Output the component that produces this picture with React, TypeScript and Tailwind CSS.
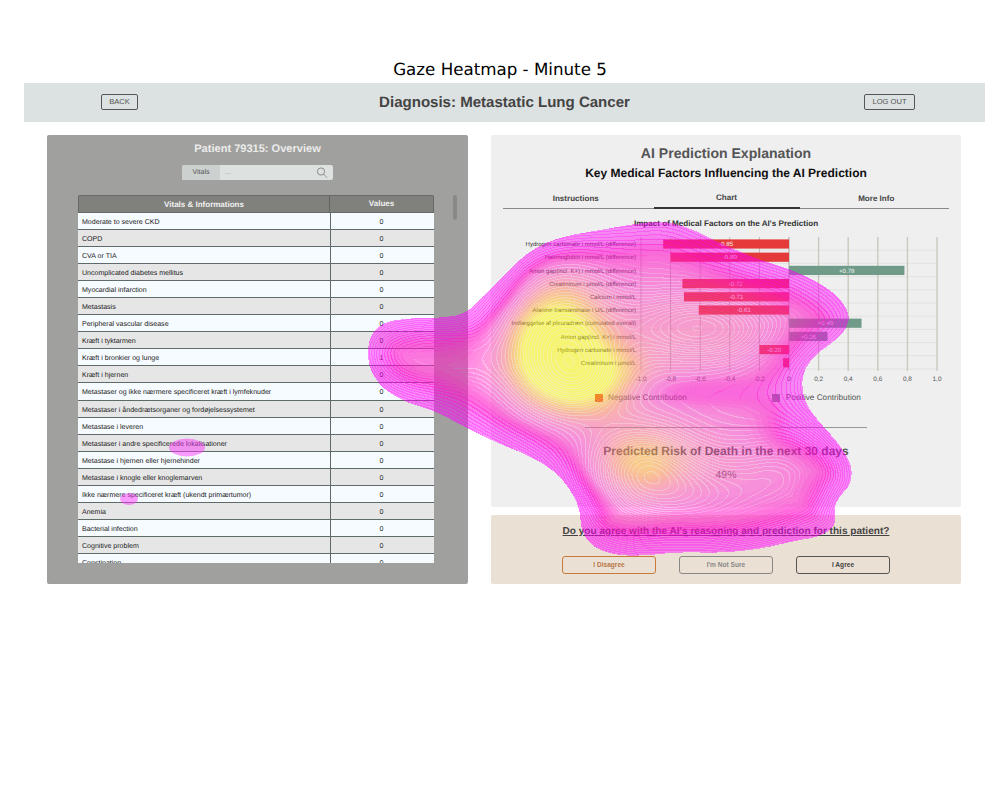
const SANS = "font-['Liberation_Sans',Arial,sans-serif]";

const ROWS: [string, number][] = [
  ["Moderate to severe CKD", 0],
  ["COPD", 0],
  ["CVA or TIA", 0],
  ["Uncomplicated diabetes mellitus", 0],
  ["Myocardial infarction", 0],
  ["Metastasis", 0],
  ["Peripheral vascular disease", 0],
  ["Kræft i tyktarmen", 0],
  ["Kræft i bronkier og lunge", 1],
  ["Kræft i hjernen", 0],
  ["Metastaser og ikke nærmere specificeret kræft i lymfeknuder", 0],
  ["Metastaser i åndedrætsorganer og fordøjelsessystemet", 0],
  ["Metastase i leveren", 0],
  ["Metastaser i andre specificerede lokalisationer", 0],
  ["Metastase i hjernen eller hjernehinder", 0],
  ["Metastase i knogle eller knoglemarven", 0],
  ["Ikke nærmere specificeret kræft (ukendt primærtumor)", 0],
  ["Anemia", 0],
  ["Bacterial infection", 0],
  ["Cognitive problem", 0],
  ["Constipation", 0],
];

const BARS: [string, number, string][] = [
  ["Hydrogen carbonate i mmol/L (difference)", -0.85, "-0.85"],
  ["Haemoglobin i mmol/L (difference)", -0.8, "-0.80"],
  ["Anion gap(incl. K+) i mmol/L (difference)", 0.78, "+0.78"],
  ["Creatininum i µmol/L (difference)", -0.72, "-0.72"],
  ["Calcium i mmol/L", -0.71, "-0.71"],
  ["Alanine transaminase i U/L (difference)", -0.61, "-0.61"],
  ["Indlæggelse af pleuradræn (cumulated overall)", 0.49, "+0.49"],
  ["Anion gap(incl. K+) i mmol/L", 0.26, "+0.26"],
  ["Hydrogen carbonate i mmol/L", -0.2, "-0.20"],
  ["Creatininum i µmol/L", -0.04, ""],
];

const TICKS = ["-1,0", "-0,8", "-0,6", "-0,4", "-0,2", "0", "0,2", "0,4", "0,6", "0,8", "1,0"];

// heatmap outline, page coordinates
const OUTLINE: [number, number][] = [
  [367, 350], [372, 332], [385, 322], [410, 318], [440, 318], [465, 314], [480, 300],
  [505, 275], [530, 250], [560, 237], [600, 230], [640, 223], [665, 221], [690, 228],
  [720, 243], [760, 260], [790, 269], [820, 283], [840, 298], [850, 315], [846, 330],
  [832, 343], [815, 355], [803, 372], [802, 390], [808, 408], [822, 425], [840, 445],
  [852, 465], [851, 485], [838, 498], [834, 510], [836, 525], [822, 536], [790, 542],
  [760, 549], [720, 553], [680, 552], [640, 556], [615, 555], [592, 547], [581, 530],
  [580, 510], [572, 492], [556, 472], [530, 456], [500, 444], [470, 430], [435, 411],
  [405, 402], [382, 388], [370, 370],
];

function chaikin(pts: [number, number][], rounds: number) {
  let out = pts;
  for (let r = 0; r < rounds; r++) {
    const next: [number, number][] = [];
    out.forEach((p, i) => {
      const q = out[(i + 1) % out.length];
      next.push([p[0] * 0.75 + q[0] * 0.25, p[1] * 0.75 + q[1] * 0.25]);
      next.push([p[0] * 0.25 + q[0] * 0.75, p[1] * 0.25 + q[1] * 0.75]);
    });
    out = next;
  }
  return out;
}

// x, y, spread x, spread y, weight
const BUMPS = [
  [556, 333, 32, 38, 0.62],
  [584, 378, 38, 26, 0.62],
  [530, 352, 22, 30, 0.12],
  [640, 462, 34, 24, 0.34],
  [700, 330, 60, 28, 0.1],
  [700, 470, 60, 30, 0.06],
  [700, 392, 70, 11, -0.14],
  [795, 432, 24, 14, -0.1],
  [500, 300, 30, 14, -0.06],
];

// only bend the contour lines, so the plateau has no creases from the outline
const LINE_BUMPS = [
  [700, 328, 55, 26, 1],
  [690, 500, 70, 32, 1],
  [560, 345, 42, 50, 1.2],
  [585, 378, 30, 22, 0.4],
  [640, 462, 38, 28, 0.8],
  [790, 470, 35, 30, 0.5],
  [430, 355, 40, 22, 0.5],
];

// h, r, g, b, alpha: the spring colour map with an alpha that dips on the plateau
const RAMP = [
  [0, 255, 0, 255, 0.42],
  [0.2, 255, 0, 240, 0.46],
  [0.32, 255, 20, 205, 0.62],
  [0.37, 255, 30, 200, 0.6],
  [0.46, 255, 50, 200, 0.5],
  [0.6, 255, 100, 160, 0.52],
  [0.74, 255, 153, 102, 0.62],
  [0.87, 255, 200, 50, 0.58],
  [1, 255, 255, 0, 0.52],
];

function rampAt(h: number) {
  for (let i = 1; i < RAMP.length; i++) {
    if (h <= RAMP[i][0]) {
      const a = RAMP[i - 1];
      const b = RAMP[i];
      const t = (h - a[0]) / (b[0] - a[0]);
      return [1, 2, 3, 4].map((k) => a[k] + (b[k] - a[k]) * t);
    }
  }
  return RAMP[RAMP.length - 1].slice(1);
}

function buildHeat() {
  const poly = chaikin(OUTLINE, 2);
  const X0 = 360;
  const Y0 = 215;
  const W = 500;
  const H = 345;
  const BANDS = 40;
  const level = new Float32Array(W * H).fill(-1);
  const heat = new Float32Array(W * H);
  const n = poly.length;
  for (let j = 0; j < H; j++) {
    const py = Y0 + j + 0.5;
    for (let i = 0; i < W; i++) {
      const px = X0 + i + 0.5;
      let best = 1e9;
      let inside = false;
      for (let k = 0, m = n - 1; k < n; m = k++) {
        const ax = poly[m][0];
        const ay = poly[m][1];
        const bx = poly[k][0];
        const by = poly[k][1];
        const ex = bx - ax;
        const ey = by - ay;
        let t = ((px - ax) * ex + (py - ay) * ey) / (ex * ex + ey * ey);
        t = t < 0 ? 0 : t > 1 ? 1 : t;
        const qx = ax + ex * t - px;
        const qy = ay + ey * t - py;
        const dd = qx * qx + qy * qy;
        if (dd < best) best = dd;
        if (ay > py !== by > py && px < ax + ((py - ay) / ey) * ex) inside = !inside;
      }
      if (!inside) continue;
      const d = Math.sqrt(best);
      let h = 0.46 * (1 - Math.exp(-d / 24));
      for (const b of BUMPS) {
        const u = (px - b[0]) / b[2];
        const v = (py - b[1]) / b[3];
        h += b[4] * Math.exp(-0.5 * (u * u + v * v));
      }
      let s = 0;
      for (const b of LINE_BUMPS) {
        const u = (px - b[0]) / b[2];
        const v = (py - b[1]) / b[3];
        s += b[4] * Math.exp(-0.5 * (u * u + v * v));
      }
      h = Math.max(0, Math.min(1, h));
      heat[j * W + i] = h;
      level[j * W + i] = (38 * (1 - Math.exp(-d / 30))) / 3.6 + s * 20;
    }
  }
  const paths = new Map<string, string[]>();
  const keyAt = (i: number, j: number) => {
    const l = level[j * W + i];
    if (l < 0) return "";
    const band = Math.min(BANDS - 1, Math.floor(heat[j * W + i] * BANDS));
    const r = i + 1 < W ? level[j * W + i + 1] : -1;
    const b = j + 1 < H ? level[(j + 1) * W + i] : -1;
    const line =
      (r >= 0 && Math.floor(r) !== Math.floor(l)) || (b >= 0 && Math.floor(b) !== Math.floor(l));
    return `${band}${line ? "L" : "F"}`;
  };
  for (let j = 0; j < H; j++) {
    let start = 0;
    let cur = keyAt(0, j);
    for (let i = 1; i <= W; i++) {
      const k = i < W ? keyAt(i, j) : "";
      if (k !== cur) {
        if (cur) {
          const w = i - start;
          if (!paths.has(cur)) paths.set(cur, []);
          paths.get(cur)!.push(`M${X0 + start} ${Y0 + j}h${w}v1h-${w}z`);
        }
        start = i;
        cur = k;
      }
    }
  }
  return [...paths.entries()].map(([key, d]) => {
    const h = (parseInt(key) + 0.5) / BANDS;
    const c = rampAt(h);
    let alpha = c[3];
    if (key.endsWith("L")) {
      // lines read darker near the rim and as pale gaps further in
      const pale = Math.min(1, Math.max(0, (h - 0.28) / 0.16));
      alpha = c[3] * (1.35 - 0.7 * pale);
    }
    return { key, d: d.join(""), fill: `rgba(${c[0] | 0},${c[1] | 0},${c[2] | 0},${Math.min(alpha, 0.9).toFixed(2)})` };
  });
}

const HEAT = buildHeat();

function HeatOverlay() {
  return (
    <svg className="absolute top-0 left-0 pointer-events-none" width={1000} height={800} shapeRendering="crispEdges">
      {HEAT.map((p) => (
        <path key={p.key} d={p.d} fill={p.fill} />
      ))}
      <ellipse cx={187} cy={447.5} rx={18} ry={9} fill="rgba(250,60,250,0.5)" shapeRendering="auto" />
      <ellipse cx={129} cy={499} rx={9} ry={6} fill="rgba(250,60,250,0.5)" shapeRendering="auto" />
    </svg>
  );
}

function ImpactChart() {
  const zero = 298;
  const scale = 148;
  const top = 6;
  const pitch = 13.2;
  return (
    <svg width={470} height={153} className={`block ${SANS}`}>
      {BARS.map((_, i) => (
        <line key={i} x1={150} x2={446} y1={top + (i + 1) * pitch} y2={top + (i + 1) * pitch} stroke="#e2e2e0" />
      ))}
      {TICKS.map((_, i) => {
        const x = 150 + i * 29.6;
        return (
          <line
            key={i}
            x1={x}
            x2={x}
            y1={top}
            y2={top + 134}
            stroke={i > 5 ? "#c9cabd" : "#bdbdb8"}
            strokeWidth={i >= 5 ? 1.4 : 1}
          />
        );
      })}
      {BARS.map(([label, value, text], i) => {
        const y = top + 2.4 + i * pitch;
        const w = Math.abs(value) * scale;
        const x = value < 0 ? zero - w : zero;
        return (
          <g key={label}>
            <text x={145} y={y + 6.8} textAnchor="end" fontSize={6} fill="#333">
              {label}
            </text>
            <rect x={x} y={y} width={w} height={9.2} fill={value < 0 ? "#e53a3a" : "#6f9b88"} />
            <text x={x + w / 2} y={y + 6.8} textAnchor="middle" fontSize={6.2} fill="#f4f4f4">
              {text}
            </text>
          </g>
        );
      })}
      {TICKS.map((t, i) => (
        <text key={t} x={150 + i * 29.6} y={150} textAnchor="middle" fontSize={6.4} fill="#555">
          {t}
        </text>
      ))}
    </svg>
  );
}

function VitalsTable() {
  return (
    <div className="w-[356px] h-[368px] overflow-hidden rounded-t-[2px]">
      <div className="flex h-[18px] bg-[#80807c] border border-[#666b68] text-[8px] font-bold text-[#f2f2f2] items-center">
        <div className="w-[251px] text-center border-r border-[#5f6563] h-full leading-[17px]">Vitals & Informations</div>
        <div className="flex-1 text-center">Values</div>
      </div>
      {ROWS.map(([name, value], i) => (
        <div
          key={name}
          className={`flex h-[17.06px] border-b border-[#5f6b68] text-[7.05px] text-[#222] ${
            i % 2 === 0 ? "bg-[#f6fbff]" : "bg-[#e6e6e6]"
          }`}
        >
          <div className="w-[253px] pl-[4px] border-r border-[#5f6b68] leading-[19px] whitespace-nowrap">{name}</div>
          <div className="flex-1 text-center leading-[19px] pr-[2px]">{value}</div>
        </div>
      ))}
    </div>
  );
}

function PatientPanel() {
  return (
    <section className="relative w-[421px] h-[449px] bg-[#a0a09e] rounded-[2px] flex flex-col items-center pt-[7px]">
      <h2 className="text-[11.05px] leading-[14px] font-bold text-[#ececec]">Patient 79315: Overview</h2>
      <div className="mt-[9px] w-[151px] h-[15px] flex rounded-[2px] bg-[#dde1e0] overflow-hidden text-[7px] text-[#555]">
        <div className="w-[38px] bg-[#ccd0cf] text-center leading-[16px]">Vitals</div>
        <div className="flex-1 pl-[5px] leading-[16px] text-[#999]">...</div>
        <svg width={12} height={15} viewBox="0 0 12 15" className="mr-[5px]" fill="none" stroke="#777" strokeWidth={0.8}>
          <circle cx={5} cy={6.5} r={3.6} />
          <path d="M7.6 9.2 L11 12.6" />
        </svg>
      </div>
      <div className="mt-[15px] w-full flex pl-[31px]">
        <VitalsTable />
        <div className="ml-[19px] w-[4px] h-[25px] rounded-[2px] bg-[#898987]" />
      </div>
    </section>
  );
}

function ExplanationPanel() {
  return (
    <section className="h-[372px] bg-[#efefef] rounded-[2px] flex flex-col items-center pt-[9px]">
      <h2 className="text-[14.07px] leading-[18px] font-bold text-[#555]">AI Prediction Explanation</h2>
      <h3 className="mt-[3px] text-[12px] leading-[16px] font-bold text-[#111]">
        Key Medical Factors Influencing the AI Prediction
      </h3>
      <div className="mt-[8px] w-[446px] h-[20px] flex border-b border-[#888] text-[8.05px] font-bold text-[#444]">
        <div className="flex-1 text-center leading-[20px] pr-[5px]">Instructions</div>
        <div className="w-[146px] h-[20px] text-center leading-[17px] border-b-2 border-[#333]">Chart</div>
        <div className="flex-1 text-center leading-[20px] pl-[4px]">More Info</div>
      </div>
      <div className="mt-[9px] text-[8.1px] leading-[11px] font-bold text-[#333]">
        Impact of Medical Factors on the AI's Prediction
      </div>
      <div className="mt-[2px] w-full">
        <ImpactChart />
      </div>
      <div className="mt-[8px] flex items-center w-full text-[8.2px] leading-[12px] text-[#555]">
        <span className="ml-[104px] w-[8px] h-[8px] bg-[#e53a3a]" />
        <span className="ml-[5px]">Negative Contribution</span>
        <span className="ml-[85px] w-[8px] h-[8px] bg-[#6f9b88]" />
        <span className="ml-[6px]">Positive Contribution</span>
      </div>
      <div className="mt-[23px] w-[282px] border-t border-[#999]" />
      <div className="mt-[15px] text-[12px] leading-[16px] font-bold text-[#555]">
        Predicted Risk of Death in the next 30 days
      </div>
      <div className="mt-[10px] text-[10.4px] leading-[14px] text-[#666]">49%</div>
    </section>
  );
}

function AgreePanel() {
  return (
    <section className="h-[69px] bg-[#ebe0d4] rounded-[2px] flex flex-col items-center pt-[10px]">
      <div className="text-[10.07px] leading-[14px] font-bold text-[#444] underline">
        Do you agree with the AI's reasoning and prediction for this patient?
      </div>
      <div className="mt-[17px] flex gap-[23px] text-[6.6px] font-bold">
        <button className="w-[94px] h-[18px] rounded-[3px] border-[1.5px] border-[#c87a3a] text-[#b8794a]">I Disagree</button>
        <button className="w-[94px] h-[18px] rounded-[3px] border-[1.5px] border-[#888] text-[#888]">I'm Not Sure</button>
        <button className="w-[94px] h-[18px] rounded-[3px] border-[1.5px] border-[#555] text-[#444]">I Agree</button>
      </div>
    </section>
  );
}

export default function App() {
  return (
    <div className={`relative w-[1000px] h-[800px] bg-white overflow-hidden [text-rendering:geometricPrecision] ${SANS}`}>
      <div className="h-[83px] pt-[58px] text-center font-['DejaVu_Sans',sans-serif] text-[16.7px] leading-[22px] text-black">
        Gaze Heatmap - Minute 5
      </div>
      <div className="ml-[24px] w-[961px]">
        <header className="h-[39px] bg-[#dce1e1] flex items-center justify-between pl-[77px] pr-[70px]">
          <button className="w-[37px] h-[16px] rounded-[2px] border border-[#555] text-[7.6px] leading-[14px] text-[#555] mb-[1px]">BACK</button>
          <h1 className="ml-[7px] text-[15.05px] font-bold text-[#444] pt-[1px]">Diagnosis: Metastatic Lung Cancer</h1>
          <button className="w-[51px] h-[16px] rounded-[2px] border border-[#555] text-[7.6px] leading-[14px] text-[#555] mb-[1px]">LOG OUT</button>
        </header>
        <main className="pt-[13px] pl-[23px] flex gap-[23px]">
          <PatientPanel />
          <div className="w-[470px] flex flex-col gap-[8px]">
            <ExplanationPanel />
            <AgreePanel />
          </div>
        </main>
      </div>
      <HeatOverlay />
    </div>
  );
}
